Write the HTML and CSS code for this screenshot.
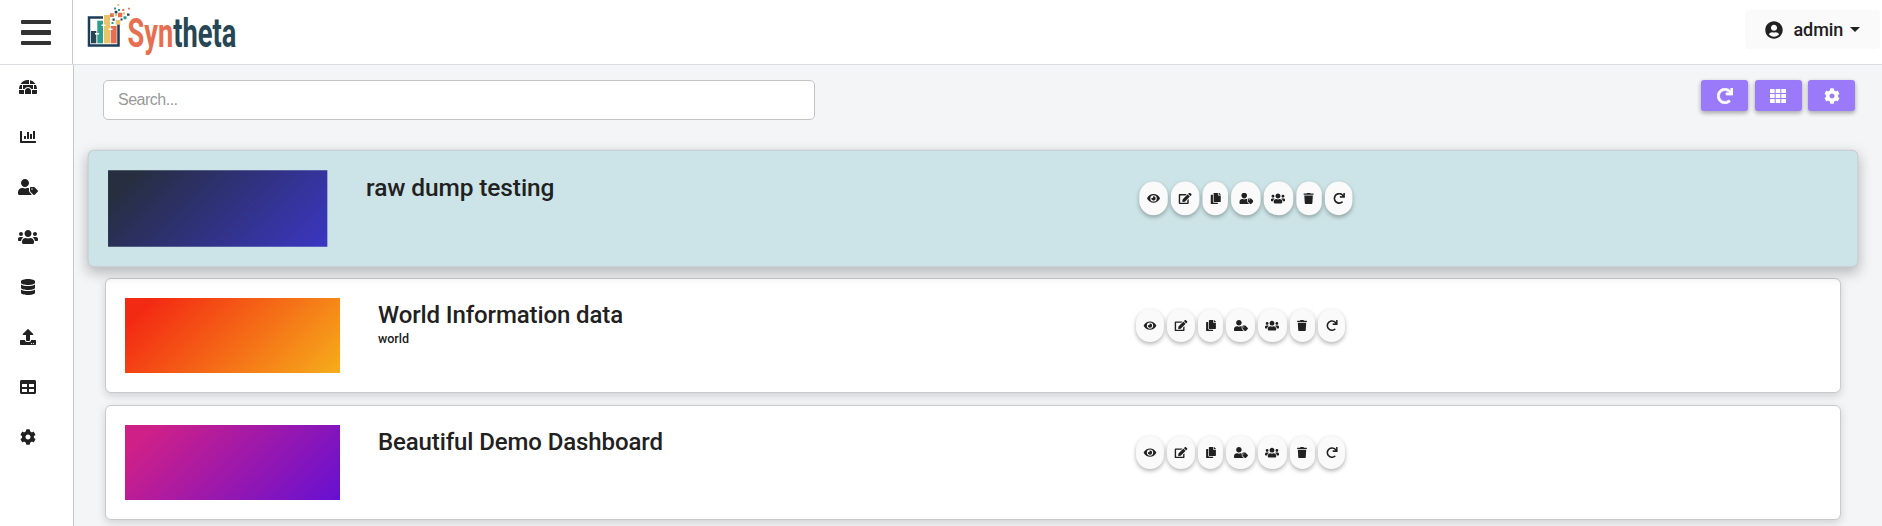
FILE: index.html
```html
<!DOCTYPE html>
<html lang="en">
<head>
<meta charset="utf-8">
<title>Syntheta</title>
<link rel="stylesheet" href="styles.css">
</head>
<body>
<svg class="sprite" aria-hidden="true">
  <symbol id="igloo" viewBox="0 0 576 512"><path d="M320 33.9c-10.5-1.2-21.2-1.9-32-1.9-99.8 0-187.8 50.8-239.4 128H320V33.9zM96 192H30.3C11.1 230.6 0 274 0 320h96V192zM352 39.4V160h175.4C487.2 99.9 424.8 55.9 352 39.4zM480 320h96c0-46-11.1-89.4-30.3-128H480v128zm-64 64v96h128c17.7 0 32-14.3 32-32v-96H411.5c2.6 10.3 4.5 20.9 4.5 32zm32-192H128v128h49.8c22.2-38.1 63-64 110.2-64s88 25.9 110.2 64H448V192zM0 448c0 17.7 14.3 32 32 32h128v-96c0-11.1 1.9-21.7 4.5-32H0v96zm288-160c-53 0-96 43-96 96v96h192v-96c0-53-43-96-96-96z"/></symbol>
  <symbol id="chart" viewBox="0 0 512 512"><path d="M332.8 320h38.4c6.4 0 12.8-6.4 12.8-12.8V172.8c0-6.4-6.4-12.8-12.8-12.8h-38.4c-6.4 0-12.8 6.4-12.8 12.8v134.4c0 6.4 6.4 12.8 12.8 12.8zm96 0h38.4c6.4 0 12.8-6.4 12.8-12.8V76.8c0-6.4-6.4-12.8-12.8-12.8h-38.4c-6.4 0-12.8 6.4-12.8 12.8v230.4c0 6.4 6.4 12.8 12.8 12.8zm-288 0h38.4c6.4 0 12.8-6.4 12.8-12.8v-70.4c0-6.4-6.4-12.8-12.8-12.8h-38.4c-6.4 0-12.8 6.4-12.8 12.8v70.4c0 6.4 6.4 12.8 12.8 12.8zm96 0h38.4c6.4 0 12.8-6.4 12.8-12.8V108.8c0-6.4-6.4-12.8-12.8-12.8h-38.4c-6.4 0-12.8 6.4-12.8 12.8v198.4c0 6.4 6.4 12.8 12.8 12.8zM496 384H64V80c0-8.84-7.16-16-16-16H16C7.16 64 0 71.16 0 80v336c0 17.67 14.33 32 32 32h464c8.84 0 16-7.16 16-16v-32c0-8.84-7.16-16-16-16z"/></symbol>
  <symbol id="user-tag" viewBox="0 0 640 512"><path d="M630.6 364.9l-90.3-90.2c-12-12-28.3-18.7-45.3-18.7h-79.3c-17.7 0-32 14.3-32 32v79.2c0 17 6.7 33.2 18.7 45.2l90.3 90.2c12.5 12.5 32.8 12.5 45.3 0l92.5-92.5c12.6-12.5 12.6-32.7.1-45.2zm-182.8-21c-13.3 0-24-10.7-24-24s10.7-24 24-24 24 10.7 24 24c0 13.2-10.7 24-24 24zm-223.8-88c70.7 0 128-57.3 128-128C352 57.3 294.7 0 224 0S96 57.3 96 128c0 70.6 57.3 127.9 128 127.9zm127.8 111.2V294c-12.2-3.6-24.9-6.2-38.2-6.2h-16.7c-22.2 10.2-46.9 16-72.9 16s-50.6-5.8-72.9-16h-16.7C60.2 287.9 0 348.1 0 422.3v41.6c0 26.5 21.5 48 48 48h352c15.5 0 29.1-7.5 37.9-18.9l-58-58c-18.1-18.1-28.1-42.2-28.1-67.9z"/></symbol>
  <symbol id="users" viewBox="0 0 640 512"><path d="M96 224c35.3 0 64-28.7 64-64s-28.7-64-64-64-64 28.7-64 64 28.7 64 64 64zm448 0c35.3 0 64-28.7 64-64s-28.7-64-64-64-64 28.7-64 64 28.7 64 64 64zm32 32h-64c-17.6 0-33.5 7.1-45.1 18.6 40.3 22.1 68.9 62 75.1 109.4h66c17.7 0 32-14.3 32-32v-32c0-35.3-28.7-64-64-64zm-256 0c61.9 0 112-50.1 112-112S381.9 32 320 32 208 82.1 208 144s50.1 112 112 112zm76.8 32h-8.3c-20.8 10-43.9 16-68.5 16s-47.6-6-68.5-16h-8.3C179.6 288 128 339.6 128 403.2V432c0 26.5 21.5 48 48 48h288c26.5 0 48-21.5 48-48v-28.8c0-63.6-51.6-115.2-115.2-115.2zm-223.7-13.4C161.5 263.1 145.6 256 128 256H64c-35.3 0-64 28.7-64 64v32c0 17.7 14.3 32 32 32h65.9c6.3-47.4 34.9-87.3 75.2-109.4z"/></symbol>
  <symbol id="database" viewBox="0 0 448 512"><path d="M448 73.143v45.714C448 159.143 347.667 192 224 192S0 159.143 0 118.857V73.143C0 32.857 100.333 0 224 0s224 32.857 224 73.143zM448 176v102.857C448 319.143 347.667 352 224 352S0 319.143 0 278.857V176c48.125 33.143 136.208 48.572 224 48.572S399.874 209.143 448 176zm0 160v102.857C448 479.143 347.667 512 224 512S0 479.143 0 438.857V336c48.125 33.143 136.208 48.572 224 48.572S399.874 369.143 448 336z"/></symbol>
  <symbol id="upload" viewBox="0 0 512 512"><path d="M296 384h-80c-13.3 0-24-10.7-24-24V192h-87.7c-17.8 0-26.7-21.5-14.1-34.1L242.3 5.7c7.5-7.5 19.8-7.5 27.3 0l152.2 152.2c12.6 12.6 3.7 34.1-14.1 34.1H320v168c0 13.3-10.7 24-24 24zm216-8v112c0 13.3-10.7 24-24 24H24c-13.3 0-24-10.7-24-24V376c0-13.3 10.7-24 24-24h136v8c0 30.9 25.1 56 56 56h80c30.9 0 56-25.1 56-56v-8h136c13.3 0 24 10.7 24 24zm-124 88c0-11-9-20-20-20s-20 9-20 20 9 20 20 20 20-9 20-20zm64 0c0-11-9-20-20-20s-20 9-20 20 9 20 20 20 20-9 20-20z"/></symbol>
  <symbol id="table" viewBox="0 0 512 512"><path d="M464 32H48C21.49 32 0 53.49 0 80v352c0 26.51 21.49 48 48 48h416c26.51 0 48-21.49 48-48V80c0-26.51-21.49-48-48-48zM224 416H64v-96h160v96zm0-160H64v-96h160v96zm224 160H288v-96h160v96zm0-160H288v-96h160v96z"/></symbol>
  <symbol id="cog" viewBox="0 0 512 512"><path d="M487.4 315.7l-42.6-24.6c4.3-23.2 4.3-47 0-70.2l42.6-24.6c4.9-2.8 7.1-8.6 5.5-14-11.1-35.6-30-67.8-54.7-94.6-3.8-4.1-10-5.1-14.8-2.3L380.8 110c-17.9-15.4-38.5-27.3-60.8-35.1V25.8c0-5.6-3.9-10.5-9.4-11.7-36.7-8.2-74.3-7.8-109.2 0-5.5 1.2-9.4 6.1-9.4 11.7V75c-22.2 7.9-42.8 19.8-60.8 35.1L88.7 85.5c-4.9-2.8-11-1.9-14.8 2.3-24.7 26.7-43.6 58.9-54.7 94.6-1.7 5.4.6 11.2 5.5 14L67.3 221c-4.3 23.2-4.3 47 0 70.2l-42.6 24.6c-4.9 2.8-7.1 8.6-5.5 14 11.1 35.6 30 67.8 54.7 94.6 3.8 4.1 10 5.1 14.8 2.3l42.6-24.6c17.9 15.4 38.5 27.3 60.8 35.1v49.2c0 5.6 3.9 10.5 9.4 11.7 36.7 8.2 74.3 7.8 109.2 0 5.5-1.2 9.4-6.1 9.4-11.7v-49.2c22.2-7.9 42.8-19.8 60.8-35.1l42.6 24.6c4.9 2.8 11 1.9 14.8-2.3 24.7-26.7 43.6-58.9 54.7-94.6 1.5-5.5-.7-11.3-5.6-14.1zM256 336c-44.1 0-80-35.9-80-80s35.9-80 80-80 80 35.9 80 80-35.9 80-80 80z"/></symbol>
  <symbol id="redo" viewBox="0 0 512 512"><path d="M500.33 0h-47.41a12 12 0 0 0-12 12.57l4 82.76A247.42 247.42 0 0 0 256 8C119.34 8 7.9 119.53 8 256.19 8.1 393.07 119.1 504 256 504a247.1 247.1 0 0 0 166.18-63.91 12 12 0 0 0 .48-17.43l-34-34a12 12 0 0 0-16.38-.55A176 176 0 1 1 402.1 157.8l-101.53-4.87a12 12 0 0 0-12.57 12v47.41a12 12 0 0 0 12 12h200.33a12 12 0 0 0 12-12V12a12 12 0 0 0-12-12z"/></symbol>
  <symbol id="eye" viewBox="0 0 576 512"><path d="M572.52 241.4C518.29 135.59 410.93 64 288 64S57.68 135.64 3.48 241.41a32.35 32.35 0 0 0 0 29.19C57.71 376.41 165.07 448 288 448s230.32-71.64 284.52-177.41a32.35 32.35 0 0 0 0-29.19zM288 400a144 144 0 1 1 144-144 143.93 143.93 0 0 1-144 144zm0-240a95.31 95.31 0 0 0-25.31 3.79 47.85 47.85 0 0 1-66.9 66.9A95.78 95.78 0 1 0 288 160z"/></symbol>
  <symbol id="edit" viewBox="0 0 576 512"><path d="M402.6 83.2l90.2 90.2c3.8 3.8 3.8 10 0 13.8L274.4 405.6l-92.8 10.3c-12.4 1.4-22.9-9.1-21.5-21.5l10.3-92.8L388.8 83.2c3.8-3.8 10-3.8 13.8 0zm162-22.9l-48.8-48.8c-15.2-15.2-39.9-15.2-55.2 0l-35.4 35.4c-3.8 3.8-3.8 10 0 13.8l90.2 90.2c3.8 3.8 10 3.8 13.8 0l35.4-35.4c15.2-15.3 15.2-40 0-55.2zM384 346.2V448H64V128h229.8c3.2 0 6.2-1.3 8.5-3.5l40-40c7.6-7.6 2.2-20.5-8.5-20.5H48C21.5 64 0 85.5 0 112v352c0 26.5 21.5 48 48 48h352c26.5 0 48-21.5 48-48V306.2c0-10.7-12.9-16-20.5-8.5l-40 40c-2.2 2.3-3.5 5.3-3.5 8.5z"/></symbol>
  <symbol id="copy" viewBox="0 0 448 512"><path d="M320 448v40c0 13.255-10.745 24-24 24H24c-13.255 0-24-10.745-24-24V120c0-13.255 10.745-24 24-24h72v296c0 30.879 25.121 56 56 56h168zm0-344V0H152c-13.255 0-24 10.745-24 24v368c0 13.255 10.745 24 24 24h272c13.255 0 24-10.745 24-24V128H344c-13.2 0-24-10.8-24-24zm120.971-31.029L375.029 7.029A24 24 0 0 0 358.059 0H352v96h96v-6.059a24 24 0 0 0-7.029-16.97z"/></symbol>
  <symbol id="trash" viewBox="0 0 448 512"><path d="M432 32H312l-9.4-18.7A24 24 0 0 0 281.1 0H166.8a23.72 23.72 0 0 0-21.4 13.3L136 32H16A16 16 0 0 0 0 48v32a16 16 0 0 0 16 16h416a16 16 0 0 0 16-16V48a16 16 0 0 0-16-16zM53.2 467a48 48 0 0 0 47.9 45h245.8a48 48 0 0 0 47.9-45L416 128H32z"/></symbol>
  <symbol id="grid" viewBox="0 0 512 512"><path d="M24 32h101a24 24 0 0 1 24 24v104H0V56a24 24 0 0 1 24-24zM181 32h150v128H181zM363 32h125a24 24 0 0 1 24 24v104H363zM0 192h149v128H0zM181 192h150v128H181zM363 192h149v128H363zM0 352h149v128H24a24 24 0 0 1-24-24zM181 352h150v128H181zM363 352h149v104a24 24 0 0 1-24 24H363z"/></symbol>
  <symbol id="user-circle" viewBox="0 0 496 512"><path d="M248 8C111 8 0 119 0 256s111 248 248 248 248-111 248-248S385 8 248 8zm0 96c48.6 0 88 39.4 88 88s-39.4 88-88 88-88-39.4-88-88 39.4-88 88-88zm0 344c-58.7 0-111.3-26.6-146.5-68.2 18.8-35.4 55.6-59.8 98.5-59.8 2.4 0 4.8.4 7.1 1.1 13 4.2 26.6 6.9 40.9 6.9 14.3 0 28-2.7 40.9-6.9 2.3-.7 4.7-1.1 7.1-1.1 42.9 0 79.7 24.4 98.5 59.8C359.3 421.4 306.7 448 248 448z"/></symbol>
</svg>

<header class="topbar">
  <button class="menu-toggle" aria-label="Menu"><span></span><span></span><span></span></button>
  <svg class="logo" viewBox="0 0 180 64" role="img" aria-label="Syntheta">
    <path class="navy-line" d="M30 17.500H16v28h29.500V21"/>
    <path class="navy" d="M18 31h5.300v12.300H18z"/>
    <path class="teal" d="M24.300 20.700H30v22.600h-5.700z"/>
    <path class="gold" d="M31 15h6v28.300h-6z"/>
    <path class="coral" d="M37.700 26h6v17.300h-6z"/>
    <path class="notch" d="M22 33h4v1.500h-4zM28.500 24.500h4V26h-4zM35.500 28.500h4V30h-4z"/>
    <path class="gold" d="M42.700 20h4.600v4.700h-4.600zM44.300 4h2v2h-2zM50 12.500h2v2h-2zM42 14h2v2h-2z"/>
    <path class="coral" d="M37 13.300h3.800V17H37zM45 12.700h4.300v4.600H45zM55 7.700h1.800v1.800H55zM49.200 9h2v2h-2z"/>
    <path class="teal" d="M41 7.500h2v2h-2zM45 9h2v2h-2zM50.500 16.300h3v3h-3zM38.500 22h2v2h-2z"/>
    <path class="navy" d="M41.700 10.700h2.700v2.700h-2.700zM54 13.500h2.500v2.300H54zM39.500 18.500h2.200v2.200h-2.200zM47.500 18.500h2v2h-2z"/>
    <text class="word" transform="translate(54.500 46.500) scale(.665 1)"><tspan class="coral">Syn</tspan><tspan class="navy">theta</tspan></text>
  </svg>
  <button class="account"><svg class="account-icon"><use href="#user-circle"/></svg>admin<i class="caret"></i></button>
</header>

<div class="shell">
  <nav class="sidebar">
    <a><svg><use href="#igloo"/></svg></a>
    <a><svg><use href="#chart"/></svg></a>
    <a><svg><use href="#user-tag"/></svg></a>
    <a><svg><use href="#users"/></svg></a>
    <a><svg><use href="#database"/></svg></a>
    <a><svg><use href="#upload"/></svg></a>
    <a><svg><use href="#table"/></svg></a>
    <a><svg><use href="#cog"/></svg></a>
  </nav>
  <main class="content">
    <div class="toolbar">
      <input class="search" type="text" placeholder="Search...">
      <div class="tools">
        <button><svg><use href="#redo"/></svg></button>
        <button><svg><use href="#grid"/></svg></button>
        <button><svg><use href="#cog"/></svg></button>
      </div>
    </div>
    <section class="cards">
      <article class="card active">
        <div class="thumb night"></div>
        <div class="info"><h2>raw dump testing</h2></div>
        <div class="actions">
          <button class="w28"><svg><use href="#eye"/></svg></button><button class="w28"><svg><use href="#edit"/></svg></button><button class="w25"><svg><use href="#copy"/></svg></button><button class="w29"><svg><use href="#user-tag"/></svg></button><button class="w29"><svg><use href="#users"/></svg></button><button class="w25"><svg><use href="#trash"/></svg></button><button class="w26"><svg><use href="#redo"/></svg></button>
        </div>
      </article>
      <article class="card">
        <div class="thumb sunset"></div>
        <div class="info"><h2>World Information data</h2><p>world</p></div>
        <div class="actions">
          <button class="w28"><svg><use href="#eye"/></svg></button><button class="w28"><svg><use href="#edit"/></svg></button><button class="w25"><svg><use href="#copy"/></svg></button><button class="w29"><svg><use href="#user-tag"/></svg></button><button class="w29"><svg><use href="#users"/></svg></button><button class="w25"><svg><use href="#trash"/></svg></button><button class="w26"><svg><use href="#redo"/></svg></button>
        </div>
      </article>
      <article class="card">
        <div class="thumb berry"></div>
        <div class="info"><h2>Beautiful Demo Dashboard</h2></div>
        <div class="actions">
          <button class="w28"><svg><use href="#eye"/></svg></button><button class="w28"><svg><use href="#edit"/></svg></button><button class="w25"><svg><use href="#copy"/></svg></button><button class="w29"><svg><use href="#user-tag"/></svg></button><button class="w29"><svg><use href="#users"/></svg></button><button class="w25"><svg><use href="#trash"/></svg></button><button class="w26"><svg><use href="#redo"/></svg></button>
        </div>
      </article>
    </section>
  </main>
</div>
</body>
</html>
```
FILE: styles.css
```css
* { box-sizing: border-box; }
body {
  margin: 0;
  height: 526px;
  overflow: hidden;
  background: #f4f5f7;
  color: #212121;
  font-family: Roboto, "Liberation Sans", sans-serif;
}
button { border: 0; padding: 0; font: inherit; color: inherit; }
svg { fill: currentColor; display: block; }
.sprite { display: none; }

.topbar {
  display: flex;
  height: 65px;
  background: #fff;
  border-bottom: 1px solid #d9dce0;
}
.menu-toggle {
  width: 73px;
  padding: 20px 0 0 21px;
  background: #fff;
  border-right: 1px solid #ccc;
  display: flex;
  flex-direction: column;
  gap: 6px;
}
.menu-toggle span { width: 30px; height: 4.400px; border-radius: 1px; background: #333; }
.logo { width: 180px; height: 64px; }
.navy { fill: #264653; }
.navy-line { fill: none; stroke: #1d3c56; stroke-width: 2.500; }
.teal { fill: #2a9d8f; }
.gold { fill: #e9c46a; }
.coral { fill: #e76f51; }
.notch { fill: #fff; }
.word { font-size: 41px; font-weight: 700; }
.account {
  margin: 10px 2px 0 auto;
  width: 135px;
  height: 39px;
  border-radius: 4px;
  background: #fafafa;
  display: flex;
  align-items: center;
  padding-left: 20px;
  font-size: 18px;
  font-weight: 500;
  letter-spacing: -.1px;
}
.account-icon { width: 18px; height: 18px; margin-right: 10.500px; }
.caret {
  margin-left: 6.500px;
  border: 5px solid transparent;
  border-top-color: currentColor;
  border-bottom: 0;
}

.shell { display: flex; height: 461px; }
.sidebar {
  width: 74px;
  background: #fff;
  border-right: 1px solid #c8c8c8;
  padding-right: 16.500px;
  flex: none;
}
.sidebar a { height: 50px; display: flex; align-items: center; justify-content: center; }
.sidebar a:first-child { height: 47px; padding-bottom: 3px; }
.sidebar svg { width: 20px; height: 16px; }

.content { flex: 1; padding: 15px 41px 0 29px; }
.toolbar { display: flex; justify-content: space-between; margin-right: -14px; }
.search {
  width: 712px;
  height: 40px;
  border: 1px solid #c4c4c4;
  border-radius: 5px;
  background: #fff;
  padding: 0 14px 1px;
  font: 16px "Liberation Sans", Arial, sans-serif;
  letter-spacing: -.5px;
}
.search::placeholder { color: #999; }
.tools { display: flex; gap: 6.500px; }
.tools button {
  width: 47px;
  height: 31px;
  border-radius: 3px;
  background: #9b7af9;
  color: #fff;
  box-shadow: 0 2px 5px rgba(0, 0, 0, .2), 0 2px 4px rgba(0, 0, 0, .16);
  display: grid;
  place-items: center;
}
.tools svg { width: 16px; height: 16px; }
.tools svg:has([href="#redo"]) { stroke: currentColor; stroke-width: 24px; overflow: visible; }

.cards { padding: 31px 0 0 2px; display: grid; gap: 12px; }
.card {
  height: 115px;
  background: #fff;
  border: 1px solid #c8cacd;
  border-radius: 6px;
  padding: 19px;
  display: flex;
  box-shadow: 0 3px 8px rgba(0, 0, 0, .15);
}
.card.active {
  background: #cce4e7;
  transform: scale(1.02);
  box-shadow: 0 5px 12px rgba(0, 0, 0, .25);
}
.thumb { width: 215px; height: 75px; }
.night { background: linear-gradient(135deg, #262e3f 10%, #3b36c4 100%); }
.sunset { background: linear-gradient(135deg, #f32a13 10%, #f6ad1b 100%); }
.berry { background: linear-gradient(135deg, #cf2088 10%, #6610d2 100%); }
.info { width: 757.500px; padding: 3px 0 0 38px; }
.info h2 { margin: 0; font-size: 24px; line-height: 29px; font-weight: 500; letter-spacing: -.11px; }
.info p { margin: 1px 0 0; font-size: 12.500px; line-height: 16px; font-weight: 500; }
.actions { display: flex; gap: 3.300px; padding: 11px 0 0 38px; }
.actions button {
  height: 33px;
  border-radius: 14px;
  background: #fafafa;
  box-shadow: 0 2px 4px rgba(0, 0, 0, .3);
  display: grid;
  place-items: center;
}
.actions svg { width: 14px; height: 11.200px; }
.w28 { width: 28px; }
.w25 { width: 25px; }
.w26 { width: 26.500px; }
.w29 { width: 28.500px; }
```
